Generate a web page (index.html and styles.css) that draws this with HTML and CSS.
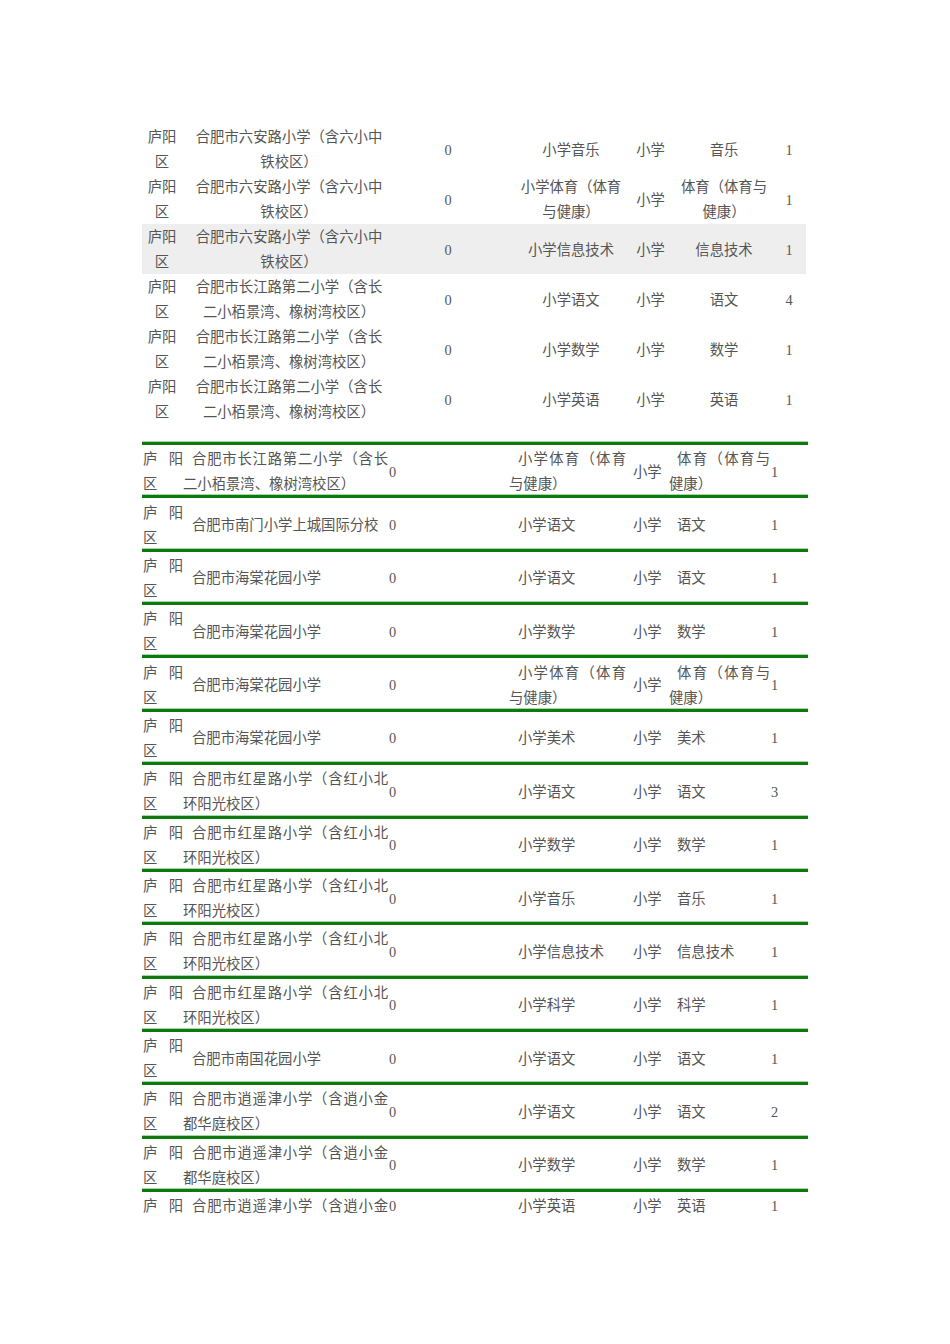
FILE: index.html
```html
<!DOCTYPE html>
<html lang="zh-CN">
<head>
<meta charset="utf-8">
<title>岗位表</title>
<link rel="stylesheet" href="styles.css">
</head>
<body>
<div class="page">
  <div class="plain">
    <div class="prow"><div>庐阳区</div><div class="p2">合肥市六安路小学（含六小中铁校区）</div><div>0</div><div class="p4">小学音乐</div><div>小学</div><div class="p6">音乐</div><div class="p7">1</div></div>
    <div class="prow"><div>庐阳区</div><div class="p2">合肥市六安路小学（含六小中铁校区）</div><div>0</div><div class="p4">小学体育（体育与健康）</div><div>小学</div><div class="p6">体育（体育与健康）</div><div class="p7">1</div></div>
    <div class="prow shade"><div>庐阳区</div><div class="p2">合肥市六安路小学（含六小中铁校区）</div><div>0</div><div class="p4">小学信息技术</div><div>小学</div><div class="p6">信息技术</div><div class="p7">1</div></div>
    <div class="prow"><div>庐阳区</div><div class="p2">合肥市长江路第二小学（含长二小栢景湾、橡树湾校区）</div><div>0</div><div class="p4">小学语文</div><div>小学</div><div class="p6">语文</div><div class="p7">4</div></div>
    <div class="prow"><div>庐阳区</div><div class="p2">合肥市长江路第二小学（含长二小栢景湾、橡树湾校区）</div><div>0</div><div class="p4">小学数学</div><div>小学</div><div class="p6">数学</div><div class="p7">1</div></div>
    <div class="prow"><div>庐阳区</div><div class="p2">合肥市长江路第二小学（含长二小栢景湾、橡树湾校区）</div><div>0</div><div class="p4">小学英语</div><div>小学</div><div class="p6">英语</div><div class="p7">1</div></div>
  </div>

  <div class="ruled">
    <div class="rrow"><div class="r1">庐阳区</div><div class="r2">合肥市长江路第二小学（含长二小栢景湾、橡树湾校区）</div><div class="r3">0</div><div class="r4">小学体育（体育与健康）</div><div class="r5">小学</div><div class="r6">体育（体育与健康）</div><div class="r7">1</div></div>
    <div class="rrow"><div class="r1">庐阳区</div><div class="r2">合肥市南门小学上城国际分校</div><div class="r3">0</div><div class="r4">小学语文</div><div class="r5">小学</div><div class="r6">语文</div><div class="r7">1</div></div>
    <div class="rrow"><div class="r1">庐阳区</div><div class="r2">合肥市海棠花园小学</div><div class="r3">0</div><div class="r4">小学语文</div><div class="r5">小学</div><div class="r6">语文</div><div class="r7">1</div></div>
    <div class="rrow"><div class="r1">庐阳区</div><div class="r2">合肥市海棠花园小学</div><div class="r3">0</div><div class="r4">小学数学</div><div class="r5">小学</div><div class="r6">数学</div><div class="r7">1</div></div>
    <div class="rrow"><div class="r1">庐阳区</div><div class="r2">合肥市海棠花园小学</div><div class="r3">0</div><div class="r4">小学体育（体育与健康）</div><div class="r5">小学</div><div class="r6">体育（体育与健康）</div><div class="r7">1</div></div>
    <div class="rrow"><div class="r1">庐阳区</div><div class="r2">合肥市海棠花园小学</div><div class="r3">0</div><div class="r4">小学美术</div><div class="r5">小学</div><div class="r6">美术</div><div class="r7">1</div></div>
    <div class="rrow"><div class="r1">庐阳区</div><div class="r2">合肥市红星路小学（含红小北环阳光校区）</div><div class="r3">0</div><div class="r4">小学语文</div><div class="r5">小学</div><div class="r6">语文</div><div class="r7">3</div></div>
    <div class="rrow"><div class="r1">庐阳区</div><div class="r2">合肥市红星路小学（含红小北环阳光校区）</div><div class="r3">0</div><div class="r4">小学数学</div><div class="r5">小学</div><div class="r6">数学</div><div class="r7">1</div></div>
    <div class="rrow"><div class="r1">庐阳区</div><div class="r2">合肥市红星路小学（含红小北环阳光校区）</div><div class="r3">0</div><div class="r4">小学音乐</div><div class="r5">小学</div><div class="r6">音乐</div><div class="r7">1</div></div>
    <div class="rrow"><div class="r1">庐阳区</div><div class="r2">合肥市红星路小学（含红小北环阳光校区）</div><div class="r3">0</div><div class="r4">小学信息技术</div><div class="r5">小学</div><div class="r6">信息技术</div><div class="r7">1</div></div>
    <div class="rrow"><div class="r1">庐阳区</div><div class="r2">合肥市红星路小学（含红小北环阳光校区）</div><div class="r3">0</div><div class="r4">小学科学</div><div class="r5">小学</div><div class="r6">科学</div><div class="r7">1</div></div>
    <div class="rrow"><div class="r1">庐阳区</div><div class="r2">合肥市南国花园小学</div><div class="r3">0</div><div class="r4">小学语文</div><div class="r5">小学</div><div class="r6">语文</div><div class="r7">1</div></div>
    <div class="rrow"><div class="r1">庐阳区</div><div class="r2">合肥市逍遥津小学（含逍小金都华庭校区）</div><div class="r3">0</div><div class="r4">小学语文</div><div class="r5">小学</div><div class="r6">语文</div><div class="r7">2</div></div>
    <div class="rrow"><div class="r1">庐阳区</div><div class="r2">合肥市逍遥津小学（含逍小金都华庭校区）</div><div class="r3">0</div><div class="r4">小学数学</div><div class="r5">小学</div><div class="r6">数学</div><div class="r7">1</div></div>
    <div class="rrow cut"><div class="r1">庐阳</div><div class="r2">合肥市逍遥津小学（含逍小金</div><div class="r3">0</div><div class="r4">小学英语</div><div class="r5">小学</div><div class="r6">英语</div><div class="r7">1</div></div>
  </div>
</div>
</body>
</html>
```

FILE: styles.css
```css
html, body {
  margin: 0;
  padding: 0;
  background: #ffffff;
}

body {
  font-family: "Liberation Serif", "Noto Sans CJK SC", serif;
  font-size: 14.35px;
  line-height: 25px;
  color: #555555;
  width: 950px;
  height: 1344px;
  overflow: hidden;
}

.page {
  padding: 124px 0 0 142px;
}

/* upper plain table */
.plain {
  width: 664px;
}

.prow {
  display: grid;
  grid-template-columns: 40px 210px 112px 130px 33px 112px 27px;
  height: 50px;
  align-items: center;
  text-align: center;
}

.prow > div {
  padding-top: 1px;
  margin-bottom: -1px;
}

.prow.shade {
  background: #eeeeee;
}

.prow > .p2 {
  padding-left: 8px;
  padding-right: 4px;
}

.prow > .p4 {
  padding-left: 14px;
  padding-right: 10px;
}

.prow > .p6 {
  padding-left: 8px;
  padding-right: 6px;
}

.prow > .p7 {
  padding-right: 7px;
}

/* lower ruled table */
.ruled {
  width: 666px;
  margin-top: 18px;
}

.rrow {
  display: grid;
  grid-template-columns: 41px 205px 121px 117px 43px 101px 38px;
  min-height: 50.36px;
  align-items: center;
  text-align: justify;
  border-top: 3px solid #0c7a0c;
  box-shadow: 0 -1px 0 #a6d8a6;
}

.rrow > div {
  padding-top: 2px;
  margin-bottom: -2px;
}

.rrow.cut {
  min-height: 25px;
  align-items: start;
}

.rrow.cut > .r1,
.rrow.cut > .r2 {
  text-align-last: justify;
}

.rrow > .r1 {
  padding-left: 1px;
}

.r2 {
  text-indent: 9px;
}

.rrow > .r3 {
  padding-left: 1px;
}

.r4 {
  text-indent: 9px;
}

.r5 {
  text-indent: 7px;
}

.r6 {
  text-indent: 8px;
}

.r7 {
  text-indent: 1px;
}
```
